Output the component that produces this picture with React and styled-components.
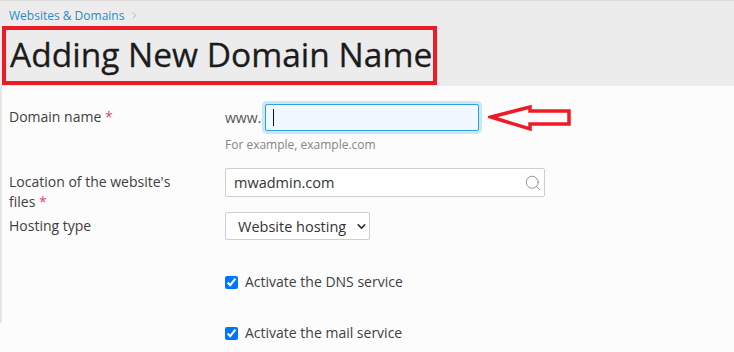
import styled, { createGlobalStyle } from "styled-components";
import { Search, ChevronDown, ChevronRight } from "lucide-react";

const GlobalStyle = createGlobalStyle`
  html, body {
    margin: 0;
    background: #fcfcfc;
    font-family: "Open Sans", "Liberation Sans", sans-serif;
    color: #404040;
  }
`;

const Header = styled.div`
  height: 86px;
  box-sizing: border-box;
  background: #ececec;
  border-top: 1px solid #dcdcdc;
  padding-top: 5px;
`;

const Breadcrumb = styled.div`
  display: flex;
  align-items: center;
  gap: 5px;
  padding-left: 9px;
  height: 18px;
  font-size: 12px;
  color: #1f8ccc;
  svg {
    color: #999;
  }
`;

const TitleBox = styled.div`
  margin: 2px 0 0 2px;
  width: 435px;
  height: 59px;
  box-sizing: border-box;
  border: 4px solid #ed1c24;
  display: flex;
  align-items: center;
  padding: 0 0 2px 4px;
`;

const Title = styled.h1`
  margin: 0;
  font-size: 33.5px;
  font-weight: 400;
  color: #1c1c1c;
  line-height: 1;
  white-space: nowrap;
  -webkit-text-stroke: 0.3px #1c1c1c;
`;

const Framed = styled.div`
  border-left: 2px solid #e6e6e6;
  padding-top: 15px;
`;

const Row = styled.div`
  display: flex;
  align-items: flex-start;
  padding-left: ${(p) => p.$indent || 7}px;
  margin-bottom: ${(p) => p.$after || 0}px;
`;

const Label = styled.div`
  width: 216px;
  flex: none;
  font-size: 14px;
  line-height: 20px;
  padding-top: ${(p) => p.$top || 0}px;
`;

const Req = styled.span`
  color: #e0436a;
`;

const Field = styled.div`
  display: flex;
  flex-direction: column;
`;

const Inline = styled.div`
  display: flex;
  align-items: center;
  font-size: 14px;
`;

const Prefix = styled.span`
  margin-right: 4px;
  color: #555;
`;

const DomainInput = styled.div`
  width: 214px;
  height: 27px;
  box-sizing: border-box;
  margin: 3px 0;
  border: 1px solid #2ba4dc;
  border-radius: 2px;
  background: #f1f8fe;
  box-shadow: 0 0 0 3px #c9e7f9;
  display: flex;
  align-items: center;
  padding-left: 7px;
`;

const Caret = styled.span`
  width: 1px;
  height: 17px;
  background: #111;
`;

const Arrow = styled.svg`
  margin-left: 9px;
  flex: none;
`;

const Hint = styled.div`
  margin-top: 3px;
  font-size: 12px;
  line-height: 16px;
  color: #858585;
`;

const TextBox = styled.div`
  width: 320px;
  height: 29px;
  box-sizing: border-box;
  border: 1px solid #cfcfcf;
  border-radius: 2px;
  background: #fff;
  display: flex;
  align-items: center;
  justify-content: space-between;
  padding: 0 2px 0 8px;
  font-size: 14.5px;
  color: #333;
  svg {
    color: #8a8a8a;
  }
`;

const Select = styled.div`
  width: 145px;
  height: 28px;
  box-sizing: border-box;
  border: 1px solid #cfcfcf;
  border-radius: 2px;
  background: #fff;
  display: flex;
  align-items: center;
  padding: 0 8px 0 12px;
  gap: 9px;
  font-size: 14.5px;
  color: #333;
  white-space: nowrap;
  overflow: hidden;
  svg {
    flex: none;
    color: #333;
  }
`;

const Check = styled.label`
  display: flex;
  align-items: center;
  gap: 7px;
  font-size: 14px;
  line-height: 20px;
  color: #404040;
  input {
    margin: 0;
    width: 13px;
    height: 13px;
    accent-color: #0075ff;
  }
`;

const Spacer = styled.div`
  height: 31px;
`;

export default function App() {
  return (
    <>
      <GlobalStyle />
      <Header>
        <Breadcrumb>
          Websites &amp; Domains
          <ChevronRight size={11} strokeWidth={1.5} />
        </Breadcrumb>
        <TitleBox>
          <Title>Adding New Domain Name</Title>
        </TitleBox>
      </Header>
      <Framed>
        <Row $after={15}>
          <Label $top={6}>
            Domain name <Req>*</Req>
          </Label>
          <Field>
            <Inline>
              <Prefix>www.</Prefix>
              <DomainInput>
                <Caret />
              </DomainInput>
              <Arrow width="84" height="28" viewBox="0 0 84 28">
                <polygon
                  points="3,13 42,3 42,7 81,7 81,20 42,20 42,25"
                  fill="none"
                  stroke="#ed1c24"
                  strokeWidth="3.5"
                  strokeLinejoin="miter"
                />
              </Arrow>
            </Inline>
            <Hint>For example, example.com</Hint>
          </Field>
        </Row>
        <Row>
          <Label $top={4}>
            Location of the website's
            <br />
            files <Req>*</Req>
          </Label>
          <Field>
            <TextBox>
              mwadmin.com
              <Search size={18} strokeWidth={1.2} />
            </TextBox>
          </Field>
        </Row>
        <Row $after={32}>
          <Label $top={4}>Hosting type</Label>
          <Field>
            <Select>
              Website hosting
              <ChevronDown size={13} strokeWidth={3} />
            </Select>
          </Field>
        </Row>
        <Row>
          <Label />
          <Check>
            <input type="checkbox" checked readOnly />
            Activate the DNS service
          </Check>
        </Row>
        <Spacer />
      </Framed>
      <Row $indent={9}>
        <Label />
        <Check>
          <input type="checkbox" checked readOnly />
          Activate the mail service
        </Check>
      </Row>
    </>
  );
}
